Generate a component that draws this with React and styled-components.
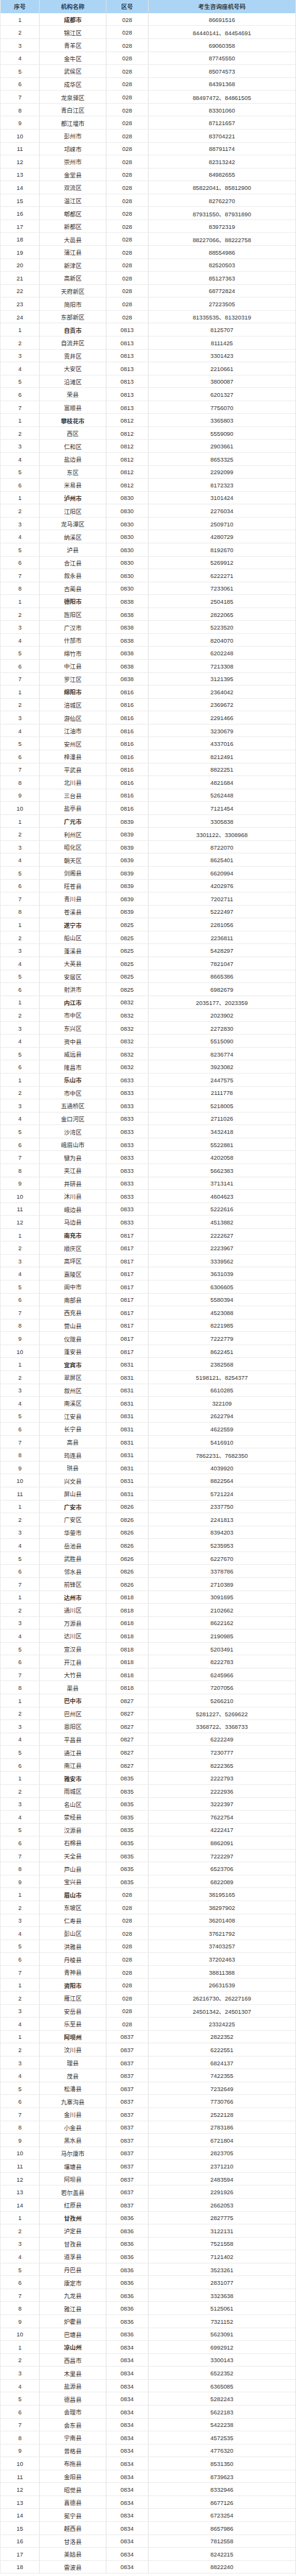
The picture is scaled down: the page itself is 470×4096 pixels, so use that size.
import React from "react";
import styled, { createGlobalStyle } from "styled-components";

const GlobalStyle = createGlobalStyle`
  html, body { margin: 0; padding: 0; background: #ffffff; }
  body { font-family: "Liberation Sans", Arial, "Noto Sans CJK SC", sans-serif; }
`;

const groups = [
  ["028", [
    ["成都市", "86691516"], ["锦江区", "84440141、84454691"], ["青羊区", "69060358"], ["金牛区", "87745550"],
    ["武侯区", "85074573"], ["成华区", "84391368"], ["龙泉驿区", "88497472、84861505"], ["青白江区", "83301060"],
    ["都江堰市", "87121657"], ["彭州市", "83704221"], ["邛崃市", "88791174"], ["崇州市", "82313242"],
    ["金堂县", "84982655"], ["双流区", "85822041、85812900"], ["温江区", "82762270"], ["郫都区", "87931550、87931890"],
    ["新都区", "83972319"], ["大邑县", "88227066、88222758"], ["蒲江县", "88554986"], ["新津区", "82520503"],
    ["高新区", "85127363"], ["天府新区", "68772824"], ["简阳市", "27223505"], ["东部新区", "81335535、81320319"],
  ]],
  ["0813", [
    ["自贡市", "8125707"], ["自流井区", "8111425"], ["贡井区", "3301423"], ["大安区", "2210661"],
    ["沿滩区", "3800087"], ["荣县", "6201327"], ["富顺县", "7756070"],
  ]],
  ["0812", [
    ["攀枝花市", "3365803"], ["西区", "5559090"], ["仁和区", "2903661"], ["盐边县", "8653325"],
    ["东区", "2292099"], ["米易县", "8172323"],
  ]],
  ["0830", [
    ["泸州市", "3101424"], ["江阳区", "2276034"], ["龙马潭区", "2509710"], ["纳溪区", "4280729"],
    ["泸县", "8192670"], ["合江县", "5269912"], ["叙永县", "6222271"], ["古蔺县", "7233061"],
  ]],
  ["0838", [
    ["德阳市", "2504185"], ["旌阳区", "2822065"], ["广汉市", "5223520"], ["什邡市", "8204070"],
    ["绵竹市", "6202248"], ["中江县", "7213308"], ["罗江区", "3121395"],
  ]],
  ["0816", [
    ["绵阳市", "2364042"], ["涪城区", "2369672"], ["游仙区", "2291466"], ["江油市", "3230679"],
    ["安州区", "4337016"], ["梓潼县", "8212491"], ["平武县", "8822251"], ["北川县", "4821684"],
    ["三台县", "5262448"], ["盐亭县", "7121454"],
  ]],
  ["0839", [
    ["广元市", "3305838"], ["利州区", "3301122、3308968"], ["昭化区", "8722070"], ["朝天区", "8625401"],
    ["剑阁县", "6620994"], ["旺苍县", "4202976"], ["青川县", "7202711"], ["苍溪县", "5222497"],
  ]],
  ["0825", [
    ["遂宁市", "2281056"], ["船山区", "2236811"], ["蓬溪县", "5428297"], ["大英县", "7821047"],
    ["安居区", "8665386"], ["射洪市", "6982679"],
  ]],
  ["0832", [
    ["内江市", "2035177、2023359"], ["市中区", "2023902"], ["东兴区", "2272830"], ["资中县", "5515090"],
    ["威远县", "8236774"], ["隆昌市", "3923082"],
  ]],
  ["0833", [
    ["乐山市", "2447575"], ["市中区", "2111778"], ["五通桥区", "5218005"], ["金口河区", "2711026"],
    ["沙湾区", "3432418"], ["峨眉山市", "5522881"], ["犍为县", "4202058"], ["夹江县", "5662383"],
    ["井研县", "3713141"], ["沐川县", "4604623"], ["峨边县", "5222616"], ["马边县", "4513882"],
  ]],
  ["0817", [
    ["南充市", "2222627"], ["顺庆区", "2223967"], ["高坪区", "3339562"], ["嘉陵区", "3631039"],
    ["阆中市", "6306605"], ["南部县", "5580394"], ["西充县", "4523088"], ["营山县", "8221985"],
    ["仪陇县", "7222779"], ["蓬安县", "8622451"],
  ]],
  ["0831", [
    ["宜宾市", "2382568"], ["翠屏区", "5198121、8254377"], ["叙州区", "6610285"], ["南溪区", "322109"],
    ["江安县", "2622794"], ["长宁县", "4622559"], ["高县", "5416910"], ["筠连县", "7862231、7682350"],
    ["珙县", "4039920"], ["兴文县", "8822564"], ["屏山县", "5721224"],
  ]],
  ["0826", [
    ["广安市", "2337750"], ["广安区", "2241813"], ["华蓥市", "8394203"], ["岳池县", "5235953"],
    ["武胜县", "6227670"], ["邻水县", "3378786"], ["前锋区", "2710389"],
  ]],
  ["0818", [
    ["达州市", "3091695"], ["通川区", "2102662"], ["万源县", "8622162"], ["达川区", "2190985"],
    ["宣汉县", "5203491"], ["开江县", "8222783"], ["大竹县", "6245966"], ["渠县", "7207056"],
  ]],
  ["0827", [
    ["巴中市", "5266210"], ["巴州区", "5281227、5269622"], ["恩阳区", "3368722、3368733"], ["平昌县", "6222249"],
    ["通江县", "7230777"], ["南江县", "8222365"],
  ]],
  ["0835", [
    ["雅安市", "2222793"], ["雨城区", "2222936"], ["名山区", "3222397"], ["荥经县", "7622754"],
    ["汉源县", "4222417"], ["石棉县", "8862091"], ["天全县", "7222297"], ["芦山县", "6523706"],
    ["宝兴县", "6822089"],
  ]],
  ["028", [
    ["眉山市", "38195165"], ["东坡区", "38297902"], ["仁寿县", "36201408"], ["彭山区", "37621792"],
    ["洪雅县", "37403257"], ["丹棱县", "37202463"], ["青神县", "38811388"],
  ]],
  ["028", [
    ["资阳市", "26631539"], ["雁江区", "26216730、26227169"], ["安岳县", "24501342、24501307"], ["乐至县", "23324225"],
  ]],
  ["0837", [
    ["阿坝州", "2822352"], ["汶川县", "6222551"], ["理县", "6824137"], ["茂县", "7422355"],
    ["松潘县", "7232649"], ["九寨沟县", "7730766"], ["金川县", "2522128"], ["小金县", "2783186"],
    ["黑水县", "6721804"], ["马尔康市", "2823705"], ["壤塘县", "2371210"], ["阿坝县", "2483594"],
    ["若尔盖县", "2291926"], ["红原县", "2662053"],
  ]],
  ["0836", [
    ["甘孜州", "2827775"], ["泸定县", "3122131"], ["甘孜县", "7521558"], ["道孚县", "7121402"],
    ["丹巴县", "3523261"], ["康定市", "2831077"], ["九龙县", "3323638"], ["雅江县", "5125061"],
    ["炉霍县", "7321152"], ["巴塘县", "5623091"],
  ]],
  ["0834", [
    ["凉山州", "6992912"], ["西昌市", "3300143"], ["木里县", "6522352"], ["盐源县", "6365085"],
    ["德昌县", "5282243"], ["会理市", "5622183"], ["会东县", "5422238"], ["宁南县", "4572535"],
    ["普格县", "4776320"], ["布拖县", "8531350"], ["金阳县", "8739623"], ["昭觉县", "8332946"],
    ["喜德县", "8677126"], ["冕宁县", "6723254"], ["越西县", "8657986"], ["甘洛县", "7812558"],
    ["美姑县", "8242215"], ["雷波县", "8822240"],
  ]],
];

const Table = styled.div`
  width: 470px;
  display: grid;
  grid-template-columns: 62px 106px 66.6px 1fr;
  font-family: "Liberation Sans", Arial, "Noto Sans CJK SC", sans-serif;
  font-size: 9.4px;
  color: #333333;
  border-right: 1px solid #e4e4e4;
  box-sizing: border-box;
`;

const Row = styled.div`
  display: contents;
`;

const Cell = styled.div`
  height: ${(p) => (p.$head ? "20.9px" : "20.57px")};
  box-sizing: border-box;
  display: flex;
  align-items: center;
  justify-content: center;
  white-space: nowrap;
  border-bottom: 1px solid ${(p) => (p.$head ? "#a9d3f3" : "#ececec")};
  border-left: ${(p) => (p.$first ? "1px solid #ececec" : "1px solid #e2e2e2")};
  background: ${(p) => (p.$head ? "#acd5f5" : "#ffffff")};
  font-weight: ${(p) => (p.$bold ? 700 : 400)};
  color: ${(p) => (p.$head ? "#2e3a46" : "#333333")};
  padding-top: 1px;
`;

export default function App() {
  const rows = [];
  groups.forEach(([code, items], gi) => {
    items.forEach(([name, phone], i) => {
      rows.push({ key: `${gi}-${i}`, idx: i + 1, name, code, phone, bold: i === 0 });
    });
  });
  return (
    <>
      <GlobalStyle />
      <Table>
        <Row>
          <Cell $head $bold $first>序号</Cell>
          <Cell $head $bold>机构名称</Cell>
          <Cell $head $bold>区号</Cell>
          <Cell $head $bold>考生咨询座机号码</Cell>
        </Row>
        {rows.map((r) => (
          <Row key={r.key}>
            <Cell $first>{r.idx}</Cell>
            <Cell $bold={r.bold}>{r.name}</Cell>
            <Cell>{r.code}</Cell>
            <Cell>{r.phone}</Cell>
          </Row>
        ))}
      </Table>
    </>
  );
}
